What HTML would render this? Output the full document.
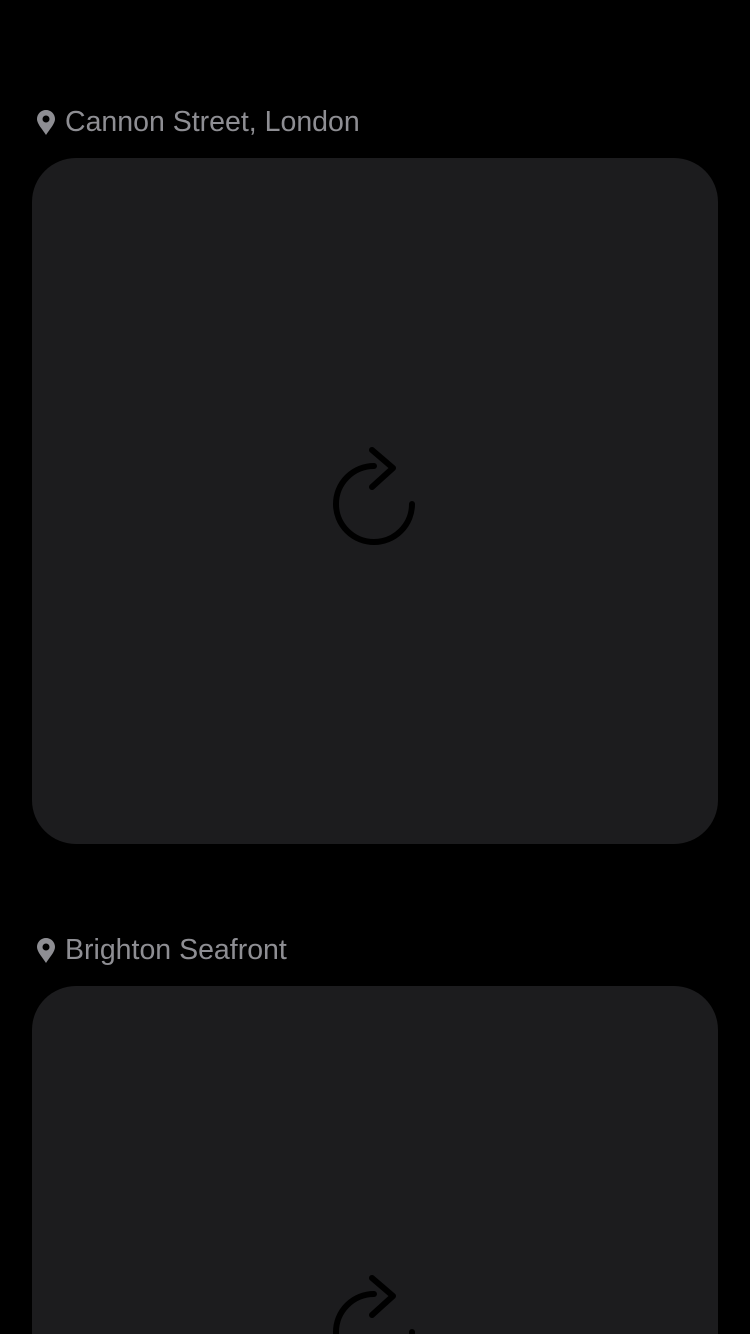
<!DOCTYPE html>
<html style="width:750px;height:1334px;overflow:hidden"><head><meta charset="utf-8"><style>
body{margin:0;width:750px;height:1334px;background:#000;overflow:hidden;position:relative;font-family:"Liberation Sans",sans-serif}
.lbl{position:absolute;left:37px;height:30px;display:flex;align-items:center;color:#8e8e93;font-size:28.5px}
.lbl svg{margin-right:10px}
.card{position:absolute;left:32px;width:686px;height:686px;background:#1c1c1e;border-radius:44px;overflow:hidden}
.card svg{position:absolute;left:0;top:0}
</style></head><body>
<div class="lbl" style="top:107px"><svg width="18" height="25" viewBox="0 0 18 25"><path d="M9 0C4 0 0 4 0 9c0 5 6 11 9 16 3-5 9-11 9-16 0-5-4-9-9-9z" fill="#8e8e93"/><circle cx="9" cy="9" r="3.5" fill="#000"/></svg>Cannon Street, London</div>
<div class="card" style="top:158px"><svg width="686" height="686"><g fill="none" stroke="#000" stroke-width="6" stroke-linecap="round" stroke-linejoin="round" transform="translate(-32,-158)"><path d="M374 466A38 38 0 1 0 412 504"/><path d="M372 450L393 468L372 487"/></g></svg></div>
<div class="lbl" style="top:935px"><svg width="18" height="25" viewBox="0 0 18 25"><path d="M9 0C4 0 0 4 0 9c0 5 6 11 9 16 3-5 9-11 9-16 0-5-4-9-9-9z" fill="#8e8e93"/><circle cx="9" cy="9" r="3.5" fill="#000"/></svg>Brighton Seafront</div>
<div class="card" style="top:986px;height:348px;border-radius:44px 44px 0 0"><svg width="686" height="348" viewBox="0 0 686 348"><g fill="none" stroke="#000" stroke-width="6" stroke-linecap="round" stroke-linejoin="round" transform="translate(-32,-158)"><path d="M374 466A38 38 0 1 0 412 504"/><path d="M372 450L393 468L372 487"/></g></svg></div>
</body></html>
